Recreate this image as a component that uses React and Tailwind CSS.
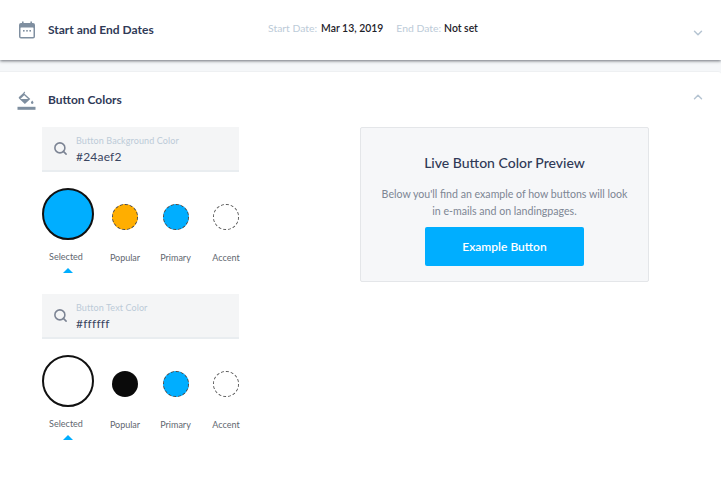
import React from 'react';
import { ChevronDown, ChevronUp, Search } from 'lucide-react';

const CalendarIcon = () => (
  <svg width="16" height="18" viewBox="0 0 16 18" className="shrink-0">
    <path d="M3 0.5h1.6V2h6.8V0.5H13V2h1a2 2 0 0 1 2 2v11.5a2 2 0 0 1-2 2H2a2 2 0 0 1-2-2V4a2 2 0 0 1 2-2h1z" fill="#7f8fa0" />
    <rect x="1.5" y="6.5" width="13" height="9.5" rx="0.6" fill="#fff" />
    <rect x="4" y="9" width="1.6" height="1.6" fill="#7f8fa0" />
    <rect x="7.2" y="9" width="1.6" height="1.6" fill="#7f8fa0" />
    <rect x="10.4" y="9" width="1.6" height="1.6" fill="#7f8fa0" />
  </svg>
);

const BucketIcon = () => (
  <svg width="19" height="19" viewBox="0 0 19 19" className="shrink-0">
    <path d="M7.2 0.6l1 0.9-0.9 1 6 5.6-5.4 5-5.9-5.6a1 1 0 0 1 0-1.4L6.4 2z" fill="#7f8fa0" />
    <path d="M7.2 4.2l4 3.8H3.4z" fill="#fff" />
    <path d="M15.2 9.4c0.8 1 1.3 1.6 1.3 2.2a1.3 1.3 0 0 1-2.6 0c0-0.6 0.5-1.2 1.3-2.2z" fill="#7f8fa0" />
    <rect x="0.5" y="15.8" width="18" height="3" fill="#7f8fa0" />
  </svg>
);

const Swatch = ({ label, className }) => (
  <div className="flex w-[26px] flex-col items-center">
    <div className="mt-[16px] flex h-[26px] items-center">
      <div className={`h-[26px] w-[26px] shrink-0 rounded-full ${className}`} />
    </div>
    <span className="mt-[21px] text-[9px] leading-[14px] text-[#5f6770]">{label}</span>
  </div>
);

const ColorPicker = ({ label, value, selectedClass, popularClass }) => (
  <div className="w-[197px]">
    <div className="flex h-[45px] items-center border-b-2 border-[#e9edf0] bg-[#f4f5f6] pl-[11px]">
      <Search className="h-[15px] w-[15px] text-[#7c8494]" strokeWidth={2.5} />
      <div className="ml-[8px] flex flex-col pt-[1px]">
        <span className="text-[9px] leading-[13px] tracking-[0.1px] text-[#bccbd8]">{label}</span>
        <span className="mt-[2px] text-[12px] leading-[15px] tracking-[0.2px] text-[#3a4561]">{value}</span>
      </div>
    </div>
    <div className="mt-[16px] flex h-[100px]">
      <div className="flex w-[52px] shrink-0 flex-col items-center">
        <div className={`h-[52px] w-[52px] shrink-0 rounded-full border-2 border-[#111] ${selectedClass}`} />
        <span className="mt-[10px] -translate-x-[2px] text-[9px] leading-[14px] text-[#5f6770]">Selected</span>
        <div className="mt-[4px] h-0 w-0 border-x-[5px] border-b-[5px] border-x-transparent border-b-[#00aeff]" />
      </div>
      <div className="ml-[18px] flex gap-[24.5px]">
        <Swatch label="Popular" className={popularClass} />
        <Swatch label="Primary" className="border border-dashed border-[#444] bg-[#00aeff]" />
        <Swatch label="Accent" className="border border-dashed border-[#555] bg-white" />
      </div>
    </div>
  </div>
);

export default function App() {
  return (
    <div className="h-[479px] w-[721px] overflow-hidden bg-[#f5f7f9] font-['Lato','Open_Sans',sans-serif]">
      {/* Dates */}
      <div className="flex h-[60px] items-center bg-white pl-[19px] pr-[16px] shadow-[0_1px_3px_rgba(60,65,75,0.75)]">
        <CalendarIcon />
        <h2 className="ml-[13px] w-[220px] text-[12px] font-bold text-[#303a57]">Start and End Dates</h2>
        <div className="-mt-[2px] flex items-baseline text-[10.4px]">
          <span className="text-[#bccbd8]">Start Date:</span>
          <span className="ml-[4px] font-semibold text-[#1d2129]">Mar 13, 2019</span>
          <span className="ml-[13px] text-[#bccbd8]">End Date:</span>
          <span className="ml-[3px] font-semibold text-[#1d2129]">Not set</span>
        </div>
        <ChevronDown className="ml-auto mt-[6px] h-[14px] w-[14px] text-[#b5c4d2]" strokeWidth={2.5} />
      </div>

      {/* Button colors */}
      <div className="mt-[11px] h-[408px] rounded-tr-[3px] border-t border-[#eef0f2] bg-white pt-[18px]">
        <div className="flex h-[20px] items-center pl-[17px] pr-[16px]">
          <BucketIcon />
          <h2 className="ml-[12px] text-[12px] font-bold text-[#303a57]">Button Colors</h2>
          <ChevronUp className="ml-auto -mt-[6px] h-[14px] w-[14px] text-[#b5c4d2]" strokeWidth={2.5} />
        </div>
        <div className="mt-[17px] flex items-start pl-[42px]">
          <div className="flex flex-col gap-[6px]">
            <ColorPicker
              label="Button Background Color"
              value="#24aef2"
              selectedClass="bg-[#00aeff]"
              popularClass="border border-dashed border-[#444] bg-[#ffae00]"
            />
            <ColorPicker
              label="Button Text Color"
              value="#ffffff"
              selectedClass="bg-white"
              popularClass="bg-[#0a0a0a]"
            />
          </div>
          <div className="ml-[121px] flex h-[155px] w-[289px] flex-col items-center rounded-[2px] border border-[#e4e6e9] bg-[#f6f7f9] pt-[26px]">
            <h3 className="text-[14px] font-medium leading-[18px] text-[#303a57]">Live Button Color Preview</h3>
            <p className="mt-[14px] text-center text-[10.6px] leading-[17px] text-[#7d8694]">
              Below you'll find an example of how buttons will look
              <br />
              in e-mails and on landingpages.
            </p>
            <button className="mt-[7px] h-[39px] w-[159px] rounded-[2px] bg-[#00aeff] text-[12px] font-semibold text-white">
              Example Button
            </button>
          </div>
        </div>
      </div>
    </div>
  );
}
